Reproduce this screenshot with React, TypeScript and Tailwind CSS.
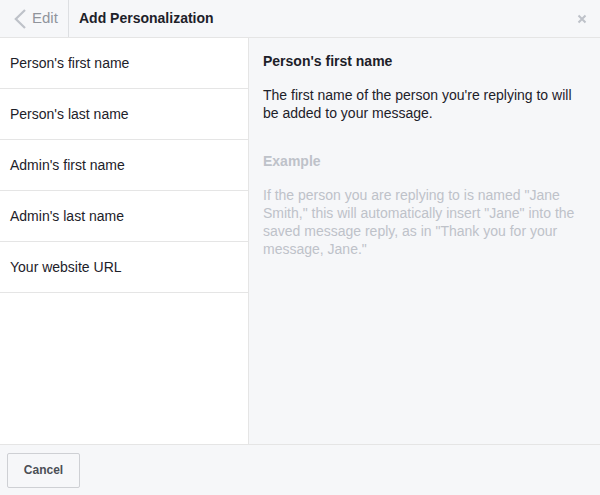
import React from "react";

const items = [
  "Person's first name",
  "Person's last name",
  "Admin's first name",
  "Admin's last name",
  "Your website URL",
];

export default function App() {
  return (
    <div
      className="w-[600px] h-[495px] flex flex-col bg-[#f6f7f9] text-[#1d2129]"
      style={{ fontFamily: "Helvetica, 'Liberation Sans', Arial, sans-serif" }}
    >
      <div className="h-[38px] flex items-stretch border-b border-[#e5e5e5] shrink-0">
        <div className="w-[69px] flex items-center border-r border-[#dddfe2] pl-[14px] gap-[6px]">
          <svg width="12" height="20" viewBox="0 0 12 20" fill="none">
            <path d="M11 1 L1.8 10 L11 19" stroke="#bec2c9" strokeWidth="2.2" />
          </svg>
          <span className="text-[15px] text-[#90949c]">Edit</span>
        </div>
        <div className="flex-1 flex items-center pl-[10px] text-[14px] font-bold text-[#1d2129]">
          Add Personalization
        </div>
        <div className="flex items-center pr-[13px]">
          <svg width="10" height="10" viewBox="0 0 10 10">
            <path d="M1.5 1.5 L8.5 8.5 M8.5 1.5 L1.5 8.5" stroke="#bec2c9" strokeWidth="2" />
          </svg>
        </div>
      </div>
      <div className="flex-1 flex min-h-0">
        <div className="w-[249px] bg-white border-r border-[#e5e5e5] flex flex-col">
          {items.map((t) => (
            <div
              key={t}
              className="h-[51px] flex items-center pl-[10px] border-b border-[#e5e5e5] text-[14px] text-[#1d2129] shrink-0"
            >
              {t}
            </div>
          ))}
        </div>
        <div className="flex-1 pl-[14px] pr-[14px] pt-[14px]">
          <div className="text-[14px] font-bold leading-[18px] text-[#1d2129]">Person's first name</div>
          <div className="mt-[16px] text-[14px] leading-[18px] text-[#1d2129]">
            The first name of the person you're replying to will be added to your message.
          </div>
          <div className="mt-[30px] text-[14px] font-bold leading-[18px] text-[#bec2c9]">Example</div>
          <div className="mt-[16px] text-[14px] leading-[18px] text-[#bec2c9]">
            If the person you are replying to is named "Jane Smith," this will automatically insert "Jane" into the saved message reply, as in "Thank you for your message, Jane."
          </div>
        </div>
      </div>
      <div className="h-[51px] border-t border-[#e5e5e5] shrink-0 flex items-center pl-[7px]">
        <button className="h-[35px] w-[73px] bg-[#f6f7f9] border border-[#ced0d4] rounded-[2px] text-[12px] font-bold text-[#4b4f56]">
          Cancel
        </button>
      </div>
    </div>
  );
}
